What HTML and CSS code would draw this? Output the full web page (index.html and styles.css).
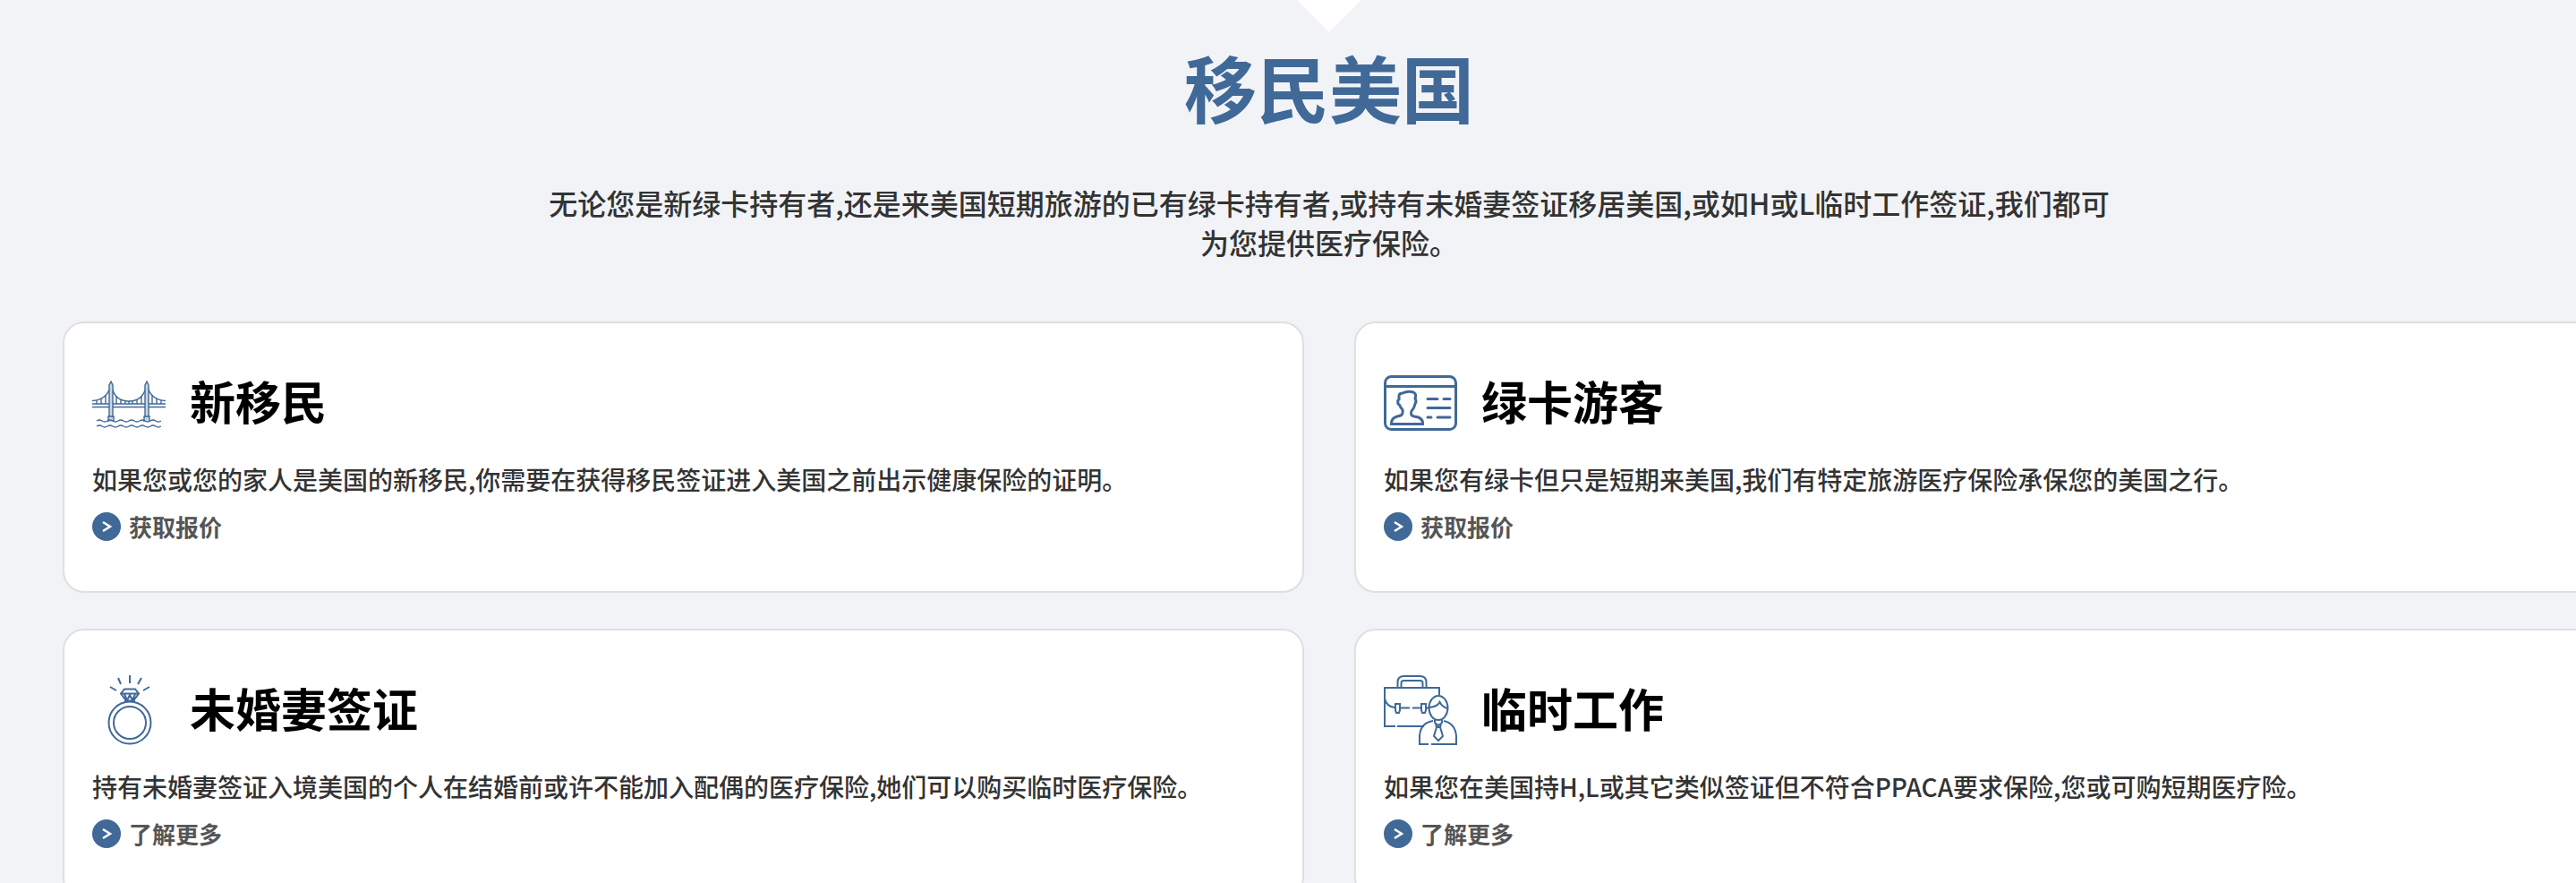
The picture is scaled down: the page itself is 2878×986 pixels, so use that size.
FILE: index.html
```
<!DOCTYPE html>
<html lang="zh-CN">
<head>
  <meta charset="UTF-8" />
  <title>移民美国</title>
  <meta name="viewport" content="width=device-width, initial-scale=1.0" />
  <link rel="stylesheet" href="styles.css">
</head>
<body>
  <section class="immigration">
    <div class="arrow"></div>
    <h2>移民美国</h2>
    <p class="intro">无论您是新绿卡持有者,还是来美国短期旅游的已有绿卡持有者,或持有未婚妻签证移居美国,或如H或L临时工作签证,我们都可为您提供医疗保险。</p>

    <div class="cards">
      <div class="card">
        <div class="card-head">
          <!-- bridge -->
          <svg class="icon fine" viewBox="0 0 82 82">
            <path d="M0 42h82M0 45.500h82" />
            <path d="M0 38.500Q15 38 20 24M22 24Q26 39 41 39Q56 39 60 24M62 24Q67 38 82 38.500" />
            <path d="M5 38v4M10 36v6M15 32v10M27 33v9M32 37v5M37 39v3M41 39v3M45 39v3M50 37v5M55 33v9M67 32v10M72 36v6M77 38v4" />
            <path class="tower" d="M19 57V21l2-4 2 4v36M59 57V21l2-4 2 4v36M18 62v-6h6v6M58 62v-6h6v6" />
            <path d="M5 61q3-2 6 0t6 0 6 0 6 0 6 0 6 0 6 0 6 0 6 0 6 0 6 0 6 0M5 67q3-2 6 0t6 0 6 0 6 0 6 0 6 0 6 0 6 0 6 0 6 0 6 0 6 0" />
          </svg>
          <h3>新移民</h3>
        </div>
        <p>如果您或您的家人是美国的新移民,你需要在获得移民签证进入美国之前出示健康保险的证明。</p>
        <a href="#"><svg class="go" viewBox="0 0 32 32"><circle cx="16" cy="16" r="16" /><path d="M12 11l8 5-8 5" /></svg>获取报价</a>
      </div>

      <div class="card">
        <div class="card-head">
          <!-- id card -->
          <svg class="icon thick" viewBox="0 0 82 82">
            <rect x="1.500" y="11.500" width="79" height="59" rx="7" />
            <path d="M2 22.500h78" />
            <path d="M8.500 64.500Q8 58 15 56Q22 55 21 51Q22 49 19 46Q18 43 16 42Q15 38 17 37V33Q17 30 21 30Q27 27 33 29Q37 31 35 36Q37 39 35 42Q34 47 31 50Q29 55 34 56Q44 57 43.500 64.500Z" />
            <path d="M49 36.500h11M67 36.500h7M49 46.500h25M49 57h4M60 57h14" />
          </svg>
          <h3>绿卡游客</h3>
        </div>
        <p>如果您有绿卡但只是短期来美国,我们有特定旅游医疗保险承保您的美国之行。</p>
        <a href="#"><svg class="go" viewBox="0 0 32 32"><circle cx="16" cy="16" r="16" /><path d="M12 11l8 5-8 5" /></svg>获取报价</a>
      </div>

      <div class="card">
        <div class="card-head">
          <!-- ring -->
          <svg class="icon" viewBox="0 0 82 82">
            <circle cx="42" cy="55" r="23.500" />
            <circle cx="42" cy="55" r="18" />
            <path d="M36 17.500h12l4 5-6 8h-8l-6-8zM32 22.500h20M36 23l3 7 3-6 3 6 3-7M37 30v3M47 30v3" />
            <path d="M42 2v9M29 5l3 7M55 5l-4 7M20 15l7 4M64 15l-7 4" />
          </svg>
          <h3>未婚妻签证</h3>
        </div>
        <p>持有未婚妻签证入境美国的个人在结婚前或许不能加入配偶的医疗保险,她们可以购买临时医疗保险。</p>
        <a href="#"><svg class="go" viewBox="0 0 32 32"><circle cx="16" cy="16" r="16" /><path d="M12 11l8 5-8 5" /></svg>了解更多</a>
      </div>

      <div class="card">
        <div class="card-head">
          <!-- briefcase and worker -->
          <svg class="icon" viewBox="0 0 82 82">
            <path d="M62 24V16H1v43h12M15 59h30" />
            <path d="M15.500 16v-6q0-7 7-7h18q7 0 7 7v6M19.500 16v-5q0-3 3-3h18q3 0 3 3v5" />
            <path d="M1 28Q3 37 12 38M18 38.500h11M32 38.500h10M47 38.500h4" />
            <path d="M13 34h5v7l-1 3h-3l-1-3zM42 34h5v7l-1 3h-3l-1-3z" />
            <ellipse cx="61" cy="38.500" rx="10.500" ry="13.500" />
            <path d="M51 38Q60 37 62.500 32Q65 37 71 39" />
            <path d="M50 79H40V70Q41 55 55 53M67 53Q80 56 81 70V79H53" />
            <path d="M57 52v3l4 3 4-3v-3M58 57l1 3-3 10 5 5 5-5-3-10 1-3M59 60h4" />
          </svg>
          <h3>临时工作</h3>
        </div>
        <p>如果您在美国持H,L或其它类似签证但不符合PPACA要求保险,您或可购短期医疗险。</p>
        <a href="#"><svg class="go" viewBox="0 0 32 32"><circle cx="16" cy="16" r="16" /><path d="M12 11l8 5-8 5" /></svg>了解更多</a>
      </div>
    </div>
  </section>
</body>
</html>
```
FILE: styles.css
```
* { margin: 0; padding: 0; box-sizing: border-box; }

body {
  background: #f1f3f7;
  color: #333;
  font-family: "Noto Sans CJK SC", sans-serif;
  font-weight: 500;
  overflow-x: hidden;
}

/* the card row runs past the right edge of the window */
.immigration {
  margin-right: -92px;
  padding: 0 70px;
}

.arrow {
  width: 72px;
  height: 36px;
  margin: 0 auto;
  background: #fff;
  clip-path: polygon(0 0, 100% 0, 50% 100%);
}

h2 {
  margin-top: 10px;
  color: #406997;
  font-size: 81px;
  font-weight: 700;
  line-height: 100px;
  text-align: center;
}

.intro {
  max-width: 1760px;
  margin: 58px auto 67px;
  font-size: 32px;
  line-height: 44px;
  text-align: center;
}

.cards {
  display: grid;
  grid-template-columns: 1fr 1fr;
  gap: 40px 56px;
}

.card {
  padding: 48px 31px 56px;
  background: #fff;
  border: 2px solid #dedfe0;
  border-radius: 24px;
}

.card-head {
  display: flex;
  align-items: center;
  gap: 27px;
  height: 82px;
}

h3 {
  padding-bottom: 6px;
  color: #000;
  font-size: 51px;
  font-weight: 700;
  line-height: 60px;
}

.card p {
  margin: 23px 0 16px;
  font-size: 28px;
  line-height: 42px;
}

.card a {
  display: flex;
  align-items: center;
  gap: 9px;
  color: #555;
  font-size: 26px;
  font-weight: 700;
  line-height: 32px;
  text-decoration: none;
}

.icon {
  width: 82px;
  height: 82px;
  fill: none;
  stroke: #406997;
  stroke-width: 2;
}

.fine { stroke-width: 1.4; }

.thick {
  stroke-width: 3;
  stroke-linecap: round;
}

.icon .tower { fill: #c9d8e6; }

.go {
  width: 32px;
  height: 32px;
  fill: #406997;
}

.go path {
  fill: none;
  stroke: #fff;
  stroke-width: 2.5;
}
```
